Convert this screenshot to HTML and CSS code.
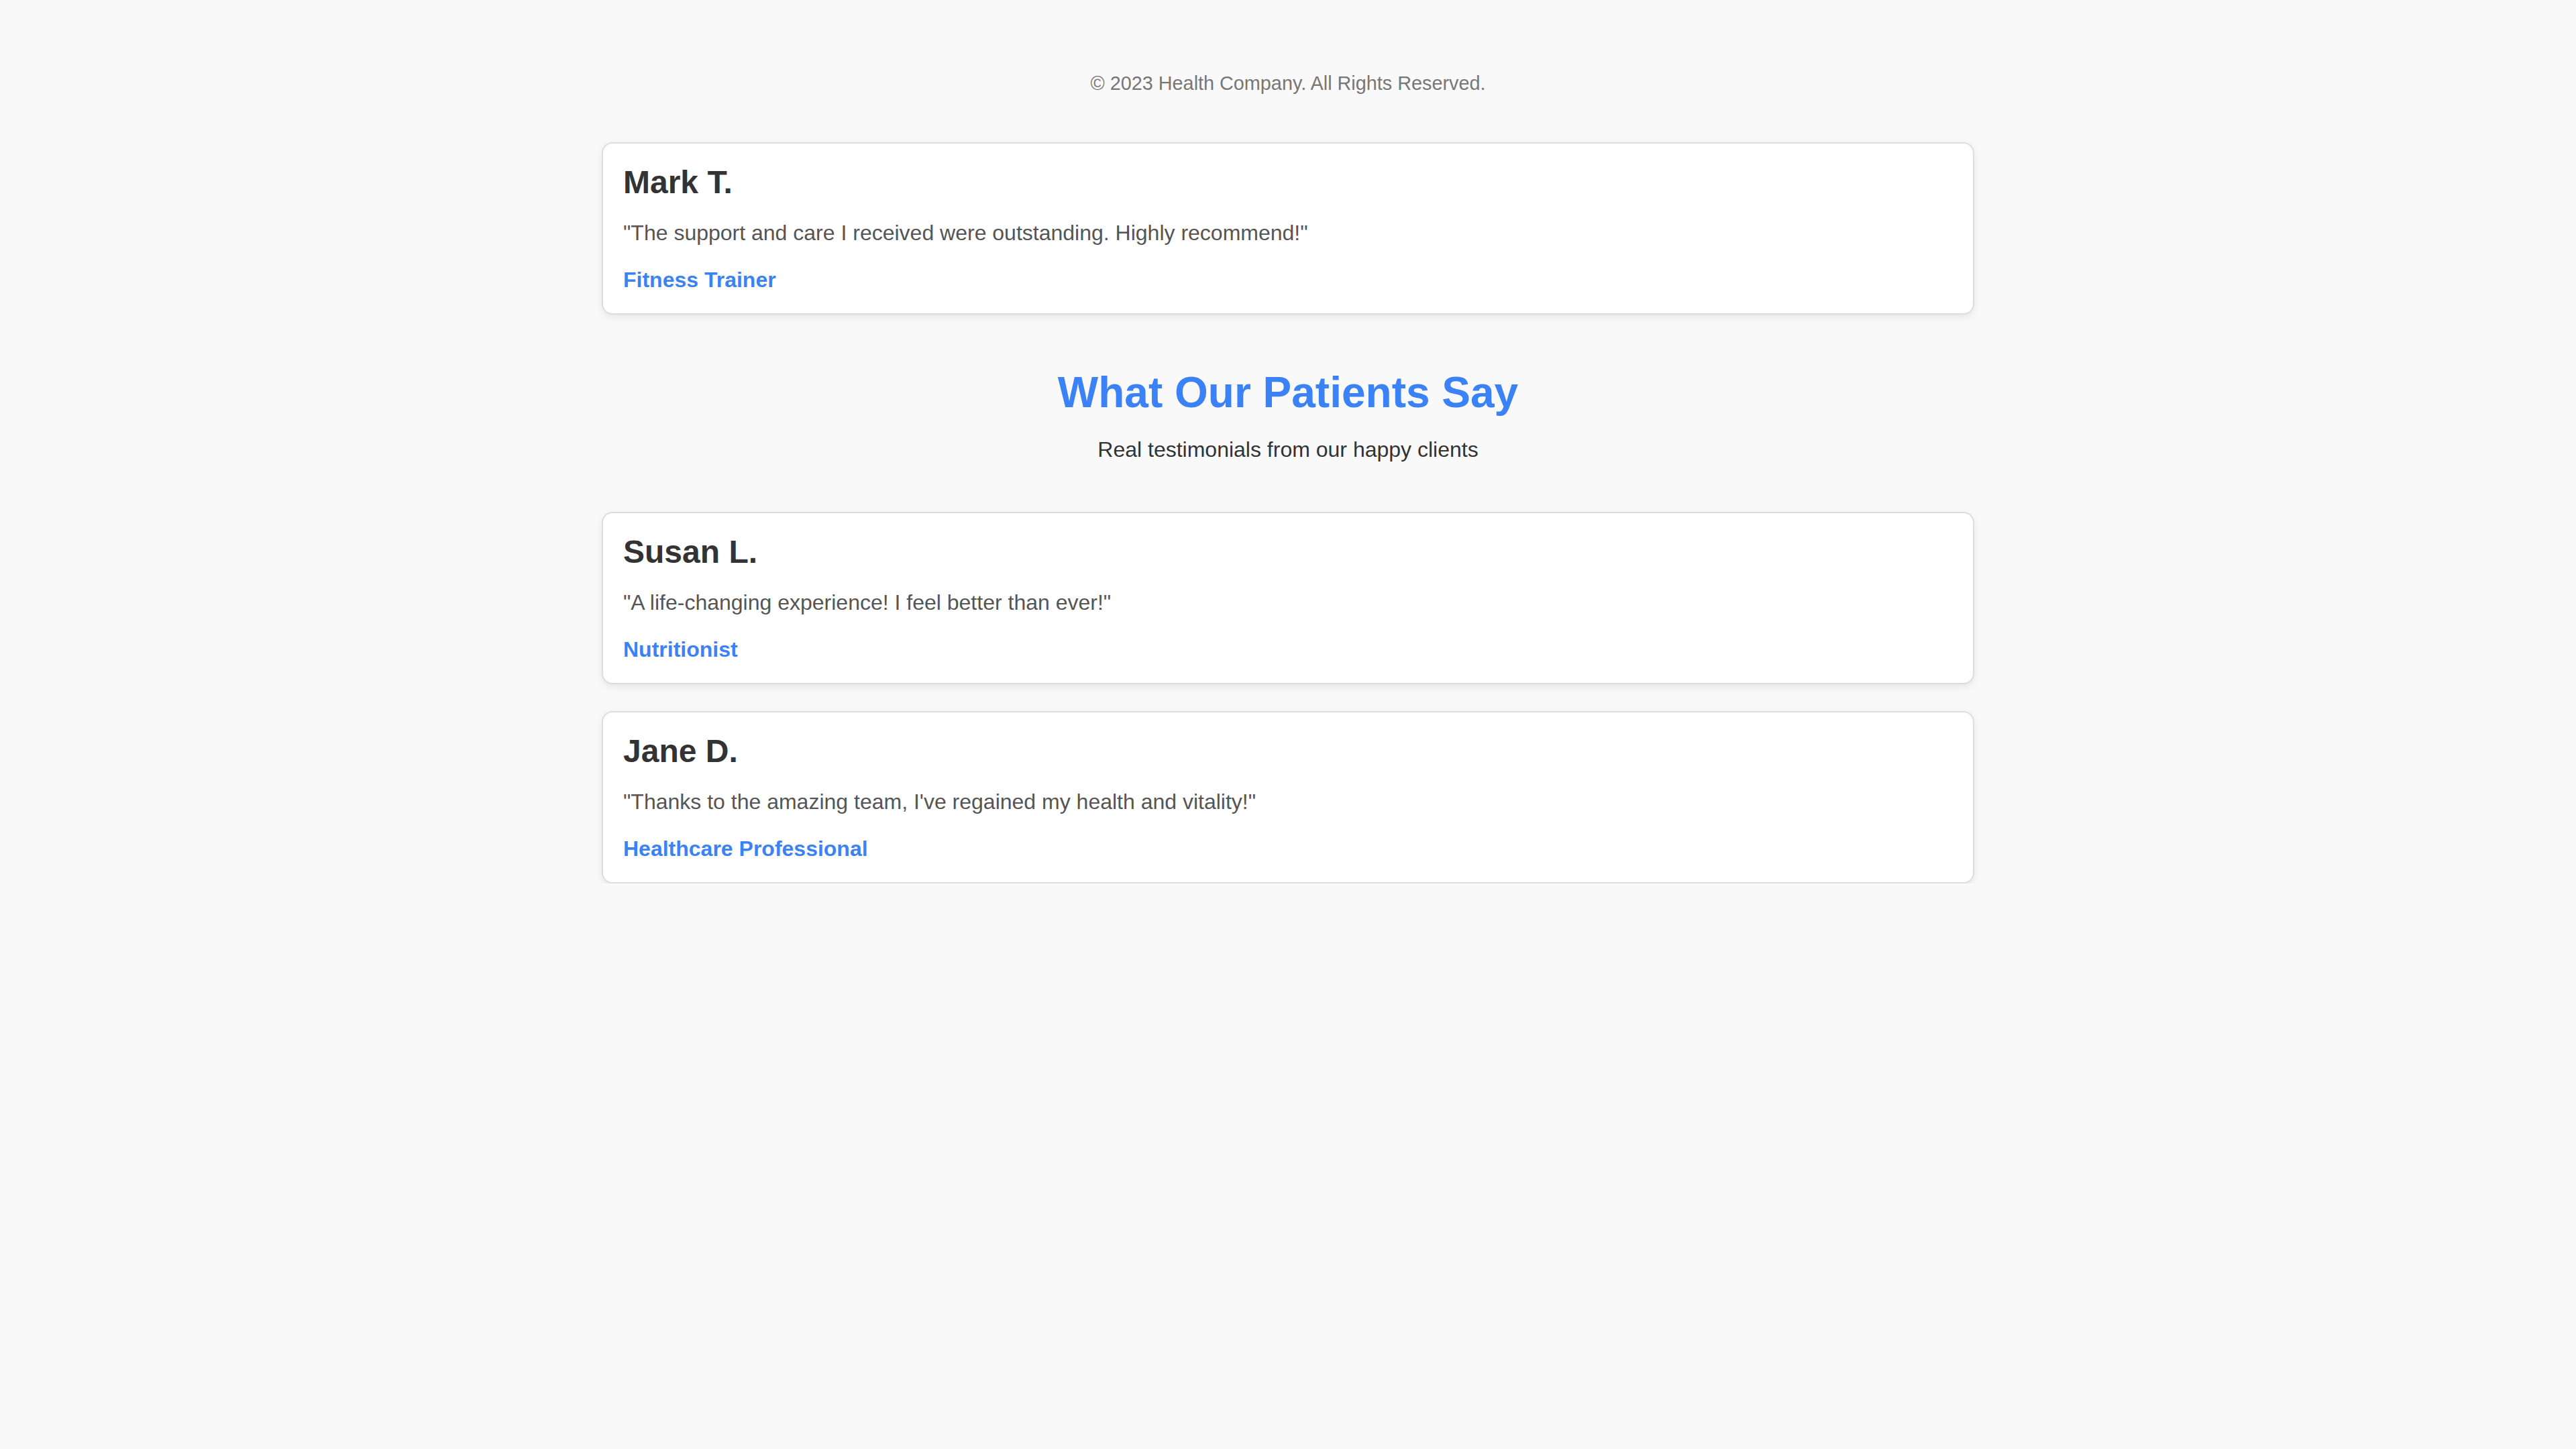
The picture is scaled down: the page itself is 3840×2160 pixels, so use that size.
FILE: index.html
```html
<!DOCTYPE html>
<html lang="en">
<head>
<meta charset="utf-8">
<title>What Our Patients Say</title>
<link rel="stylesheet" href="styles.css">
</head>
<body>
<main class="page">
  <p class="copyright">© 2023 Health Company. All Rights Reserved.</p>

  <article class="card">
    <h3 class="card-name">Mark T.</h3>
    <p class="card-quote">"The support and care I received were outstanding. Highly recommend!"</p>
    <p class="card-role">Fitness Trainer</p>
  </article>

  <header class="intro">
    <h2 class="intro-title">What Our Patients Say</h2>
    <p class="intro-sub">Real testimonials from our happy clients</p>
  </header>

  <section class="card-list">
    <article class="card">
      <h3 class="card-name">Susan L.</h3>
      <p class="card-quote">"A life-changing experience! I feel better than ever!"</p>
      <p class="card-role">Nutritionist</p>
    </article>
    <article class="card">
      <h3 class="card-name">Jane D.</h3>
      <p class="card-quote">"Thanks to the amazing team, I've regained my health and vitality!"</p>
      <p class="card-role">Healthcare Professional</p>
    </article>
  </section>
</main>
</body>
</html>
```

FILE: styles.css
```css
html, body {
  margin: 0;
  padding: 0;
}

body {
  background: #f9f9f9;
  font-family: "Liberation Sans", Arial, sans-serif;
  color: #333;
}

.page {
  width: 2046px;
  margin: 0 auto;
  padding-top: 108px;
  display: flex;
  flex-direction: column;
}

.copyright {
  margin: 0 0 71px;
  font-size: 28.8px;
  color: #777;
  text-align: center;
}

.card {
  box-sizing: border-box;
  background: #fff;
  border: 2px solid #ddd;
  border-radius: 16px;
  padding: 30px 30px 31px;
  box-shadow: 0 4px 12px rgba(0, 0, 0, 0.08);
  display: flex;
  flex-direction: column;
}

.card-name {
  margin: 0 0 30px;
  font-size: 48px;
  font-weight: bold;
  color: #333;
}

.card-quote {
  margin: 0 0 33px;
  font-size: 32px;
  color: #555;
}

.card-role {
  margin: 0;
  font-size: 32px;
  font-weight: bold;
  color: #3b82f6;
}

.intro {
  margin: 79px 0 74px;
  text-align: center;
}

.intro-title {
  margin: 0 0 30px;
  font-size: 64px;
  font-weight: bold;
  color: #3b82f6;
}

.intro-sub {
  margin: 0;
  font-size: 32px;
  color: #333;
}

.card-list {
  display: flex;
  flex-direction: column;
  gap: 40px;
}
```
